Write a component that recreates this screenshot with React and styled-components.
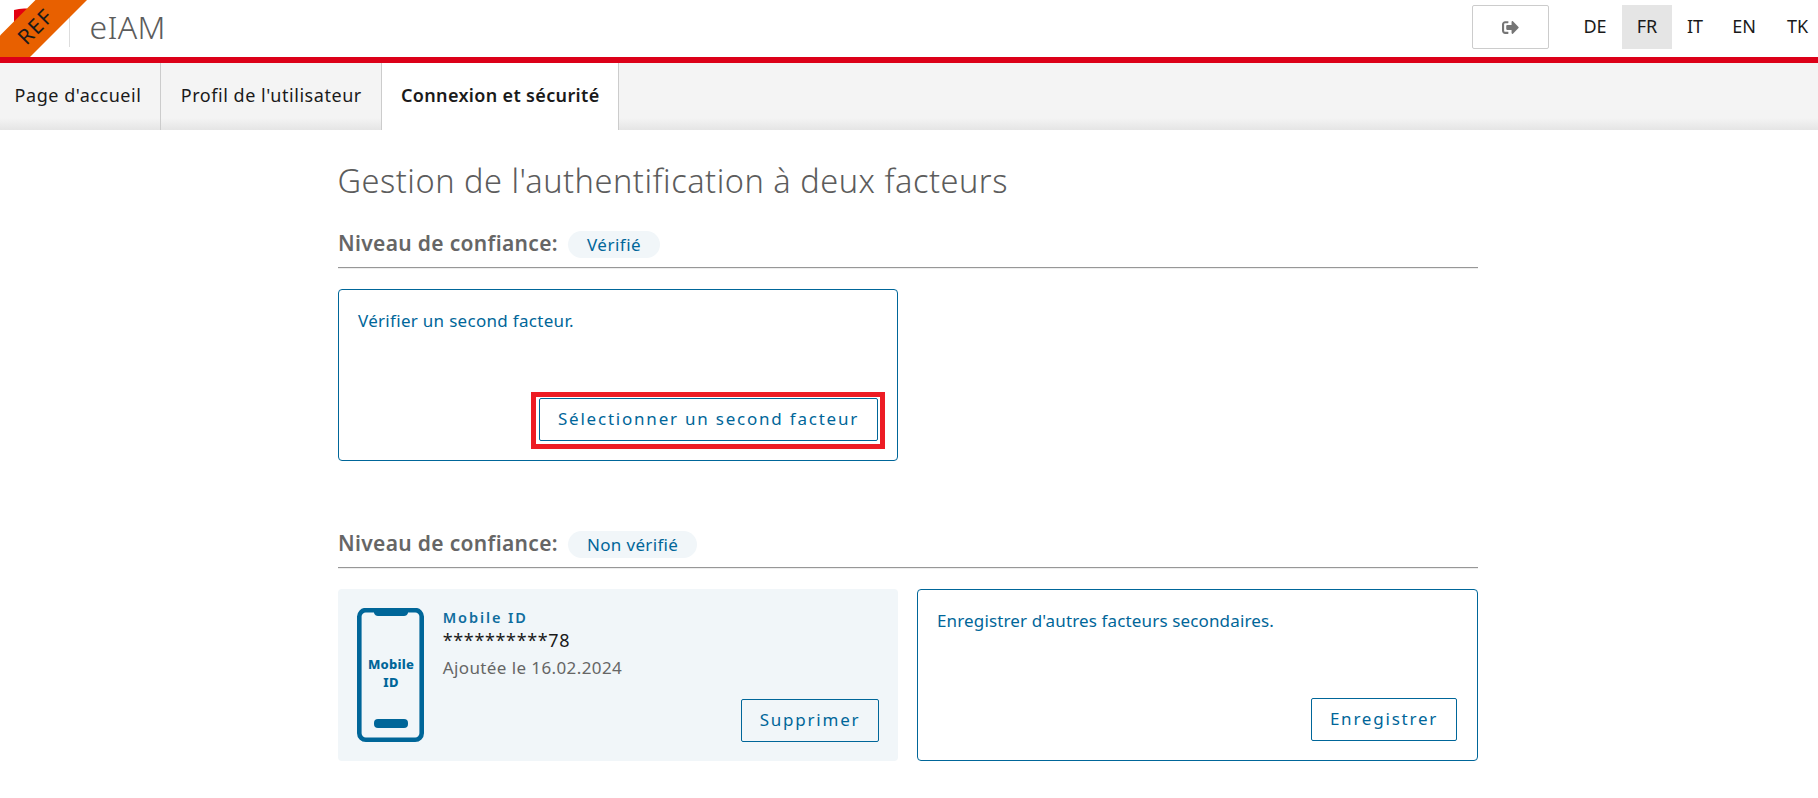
import React from 'react';
import styled, { createGlobalStyle } from 'styled-components';
import { FaSignOutAlt } from 'react-icons/fa';

const BLUE = '#006699';
const SOFT = '#f1f6f9';

const GlobalStyle = createGlobalStyle`
  * { box-sizing: border-box; }
  body {
    margin: 0;
    overflow-x: hidden;
    background: #fff;
    color: #1a1a1a;
    font-family: "Noto Sans", "Open Sans", sans-serif;
    font-size: 17px;
  }
`;

const Header = styled.header`
  position: relative;
  display: flex;
  height: 63px;
  border-bottom: 6px solid #dc0018;
  overflow: hidden;
`;

const Corner = styled.svg`
  display: block;
  flex: none;
  width: 88px;
  height: 57px;
`;

const RibbonText = styled.text`
  font-size: 21px;
  letter-spacing: 1.6px;
  fill: #1a1a1a;
`;

const AppName = styled.div`
  padding-left: 1.5px;
  font-size: 32px;
  font-weight: 300;
  line-height: 53px;
  letter-spacing: 0.3px;
  color: #5c5c5c;
`;

const HeaderTools = styled.div`
  display: flex;
  gap: 19px;
  margin: 5px -7px 8px auto;
`;

const LogoutButton = styled.button`
  display: flex;
  align-items: center;
  justify-content: center;
  width: 77px;
  height: 44px;
  padding: 0;
  border: 1px solid #ccc;
  border-radius: 2px;
  background: #fff;
  color: #757575;
  font-size: 17px;
`;

const Languages = styled.nav`
  display: flex;
`;

const Language = styled.a`
  width: ${(p) => p.$width}px;
  height: 44px;
  line-height: 42px;
  font-size: 18px;
  text-align: center;
  background: ${(p) => (p.$active ? '#e5e5e5' : 'transparent')};
`;

const TabBar = styled.nav`
  display: flex;
  height: 67px;
  background: linear-gradient(#f4f4f4 0 55px, #e5e5e5 67px);
`;

const Tab = styled.a`
  width: ${(p) => p.$width}px;
  padding-left: ${(p) => p.$pad}px;
  border-right: 1px solid #ccc;
  font-size: 18px;
  line-height: 64px;
  white-space: nowrap;
  font-weight: ${(p) => (p.$active ? 600 : 400)};
  letter-spacing: ${(p) => (p.$active ? 0.34 : 0.54)}px;
  background: ${(p) => (p.$active ? '#fff' : 'transparent')};
`;

const Main = styled.main`
  width: 1140px;
  margin: 0 0 0 338px;
  padding-top: 28px;
`;

const Title = styled.h1`
  margin: 0 0 28px -0.5px;
  font-size: 32.5px;
  font-weight: 300;
  line-height: 45px;
  letter-spacing: 0.52px;
  color: #5c5c5c;
`;

const Section = styled.section`
  margin-bottom: 70px;
`;

const SectionHead = styled.div`
  display: flex;
  gap: 10px;
  height: 37px;
  margin-bottom: 21px;
  border-bottom: 1px solid #979797;
  box-shadow: 0 1px 0 #eee;
`;

const SectionTitle = styled.h2`
  width: 220px;
  margin: 0;
  font-size: 21px;
  font-weight: 600;
  line-height: 24px;
  letter-spacing: 0.33px;
  white-space: nowrap;
  color: #666;
`;

const Badge = styled.span`
  height: 27px;
  padding: 0 18.5px 0 19px;
  border-radius: 14px;
  background: ${SOFT};
  color: ${BLUE};
  line-height: 27px;
  letter-spacing: ${(p) => p.$spacing}px;
`;

const Cards = styled.div`
  display: grid;
  grid-template-columns: 560px 561px;
  gap: 19px;
`;

const Card = styled.article`
  display: flex;
  flex-direction: column;
  justify-content: space-between;
  height: 172px;
  padding: 19px ${(p) => p.$right || 19}px 19px 19px;
  border: 1px solid ${BLUE};
  border-radius: 4px;
  color: ${BLUE};
`;

const FactorCard = styled.article`
  display: flex;
  height: 172px;
  padding: 19px;
  border-radius: 4px;
  background: ${SOFT};
`;

const CardText = styled.p`
  margin: 0;
  line-height: 23px;
  letter-spacing: ${(p) => p.$spacing}px;
`;

const Button = styled.button`
  position: relative;
  align-self: flex-end;
  width: ${(p) => p.$width}px;
  height: 43px;
  padding: 0 0 2px;
  border: 1px solid ${BLUE};
  border-radius: 2px;
  background: transparent;
  color: ${BLUE};
  font: inherit;
  letter-spacing: 1.78px;
  white-space: nowrap;
`;

const HighlightedButton = styled(Button)`
  &::after {
    content: '';
    position: absolute;
    top: -7px;
    right: -8px;
    bottom: -9px;
    left: -9px;
    border: 5px solid #ed1c24;
  }
`;

const PhoneDrawing = styled.svg`
  flex: none;
  width: 67px;
  height: 134px;
`;

const PhoneText = styled.text`
  font-size: 13px;
  font-weight: 800;
  letter-spacing: 0.2px;
  text-anchor: middle;
  fill: ${BLUE};
`;

const FactorInfo = styled.div`
  flex: 1;
  padding-left: 18.7px;
`;

const FactorName = styled.div`
  font-size: 14.5px;
  font-weight: 600;
  line-height: 19px;
  letter-spacing: 1.9px;
  color: #0f6d9e;
`;

const FactorNumber = styled.div`
  font-size: 18px;
  line-height: 26px;
  letter-spacing: 0.65px;
`;

const FactorDate = styled.div`
  line-height: 29px;
  letter-spacing: 0.4px;
  color: #666;
`;

function Phone() {
  return (
    <PhoneDrawing viewBox="0 0 67 134">
      <rect x="2.3" y="2.1" width="62.4" height="129.6" rx="6.5" fill="none" stroke={BLUE} strokeWidth="4.6" />
      <path d="M17 3H51V5Q50 8 47 8H21Q18 8 17 5Z" fill={BLUE} />
      <rect x="17" y="111" width="34" height="9" rx="4" fill={BLUE} />
      <PhoneText x="34" y="61">Mobile</PhoneText>
      <PhoneText x="34" y="79.2">ID</PhoneText>
    </PhoneDrawing>
  );
}

function Level({ label, spacing, children }) {
  return (
    <Section>
      <SectionHead>
        <SectionTitle>Niveau de confiance:</SectionTitle>
        <Badge $spacing={spacing}>{label}</Badge>
      </SectionHead>
      <Cards>{children}</Cards>
    </Section>
  );
}

export default function App() {
  return (
    <>
      <GlobalStyle />
      <Header>
        <Corner viewBox="0 0 88 57">
          <path d="M14 10Q20 8 27 8.5V26H14Z" fill="#e3000f" />
          <path d="M69.5 10V47" stroke="#ddd" />
          <path d="M35.5 0H87L30 57H0V35.5Z" fill="#e86000" />
          <RibbonText transform="translate(26.5 46) rotate(-45)">REF</RibbonText>
        </Corner>
        <AppName>eIAM</AppName>
        <HeaderTools>
          <LogoutButton><FaSignOutAlt /></LogoutButton>
          <Languages>
            <Language $width={54}>DE</Language>
            <Language $width={50} $active>FR</Language>
            <Language $width={46}>IT</Language>
            <Language $width={52}>EN</Language>
            <Language $width={55}>TK</Language>
          </Languages>
        </HeaderTools>
      </Header>
      <TabBar>
        <Tab $width={161} $pad={14.6}>Page d'accueil</Tab>
        <Tab $width={221} $pad={19.8}>Profil de l'utilisateur</Tab>
        <Tab $width={237} $pad={19} $active>Connexion et sécurité</Tab>
      </TabBar>
      <Main>
        <Title>Gestion de l'authentification à deux facteurs</Title>
        <Level label="Vérifié" spacing={0.5}>
          <Card>
            <CardText $spacing={0.3}>Vérifier un second facteur.</CardText>
            <HighlightedButton $width={339}>Sélectionner un second facteur</HighlightedButton>
          </Card>
        </Level>
        <Level label="Non vérifié" spacing={0.33}>
          <FactorCard>
            <Phone />
            <FactorInfo>
              <FactorName>Mobile ID</FactorName>
              <FactorNumber>**********78</FactorNumber>
              <FactorDate>Ajoutée le 16.02.2024</FactorDate>
            </FactorInfo>
            <Button $width={138}>Supprimer</Button>
          </FactorCard>
          <Card $right={20}>
            <CardText $spacing={0.14}>Enregistrer d'autres facteurs secondaires.</CardText>
            <Button $width={146}>Enregistrer</Button>
          </Card>
        </Level>
      </Main>
    </>
  );
}
